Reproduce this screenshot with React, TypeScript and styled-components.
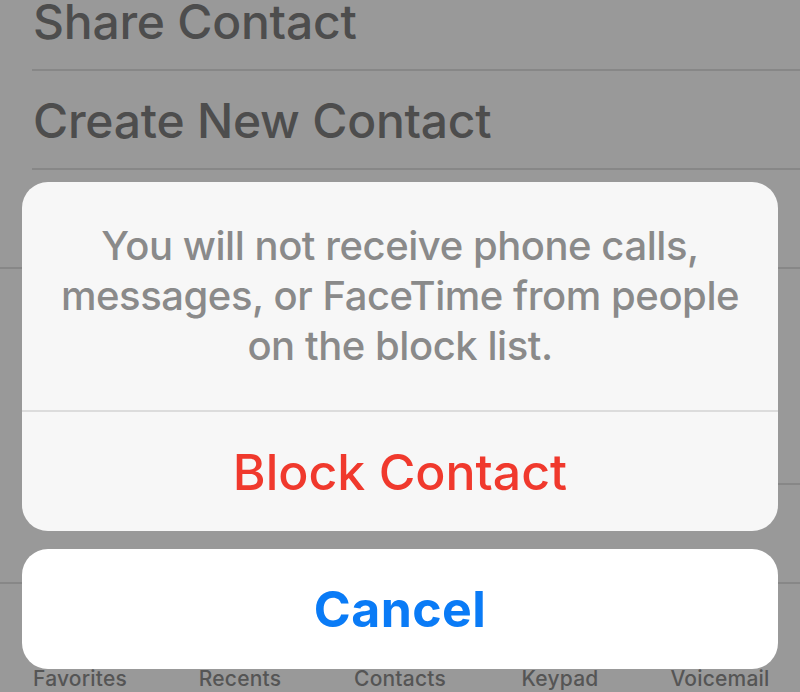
import styled, { createGlobalStyle } from "styled-components"

const GlobalStyle = createGlobalStyle`
  * { box-sizing: border-box; }
  html, body {
    margin: 0;
    padding: 0;
    background: #999999;
    font-family: Inter, "Noto Sans", "Liberation Sans", sans-serif;
  }
`

const StyledScreen = styled.main`
  position: relative;
  width: 800px;
  height: 692px;
  overflow: hidden;
  background: #999999;
  display: flex;
  flex-direction: column;
`
const StyledList = styled.ul`
  list-style: none;
  margin: -28px 0 0;
  padding: 0;
`
const StyledRow = styled.li<{ $inset?: boolean }>`
  position: relative;
  height: 99px;
  display: flex;
  align-items: center;
  padding-left: 33px;
  font-size: 48px;
  font-weight: 450;
  color: #4d4d4d;
  letter-spacing: -0.25px;

  &::after {
    content: "";
    position: absolute;
    left: ${p => (p.$inset ? "32px" : "0")};
    right: 0;
    bottom: 0;
    height: 2px;
    background: #878787;
  }
`
const StyledSectionGap = styled.li`
  height: 117px;
`
const StyledTabBar = styled.nav`
  margin-top: auto;
  height: 110px;
  border-top: 2px solid #878787;
  display: grid;
  grid-template-columns: repeat(5, 1fr);
  align-items: end;
  padding-bottom: 1px;
`
const StyledTabLabel = styled.span`
  text-align: center;
  font-size: 21px;
  font-weight: 550;
  color: #555555;
  line-height: 24px;
  letter-spacing: 0.2px;
`

// action sheet floats above the dimmed page
const StyledSheet = styled.section`
  position: absolute;
  left: 22px;
  right: 22px;
  top: 182px;
  display: flex;
  flex-direction: column;
  gap: 18px;
`
const StyledGroup = styled.div`
  background: #f7f7f7;
  border-radius: 26px;
  overflow: hidden;
`
const StyledMessage = styled.p`
  margin: 0;
  height: 230px;
  padding-top: 39px;
  border-bottom: 2px solid #dcdcdc;
  text-align: center;
  font-size: 40px;
  font-weight: 450;
  line-height: 50px;
  color: #8a8a8a;
  letter-spacing: -0.45px;
`
const StyledAction = styled.button<{ $cancel?: boolean }>`
  display: block;
  width: 100%;
  height: ${p => (p.$cancel ? "120px" : "119px")};
  border: 0;
  margin: 0;
  padding: 0;
  font-family: inherit;
  font-size: 50px;
  font-weight: ${p => (p.$cancel ? 700 : 450)};
  color: ${p => (p.$cancel ? "#0a7bf6" : "#f0392d")};
  background: ${p => (p.$cancel ? "#ffffff" : "transparent")};
  border-radius: ${p => (p.$cancel ? "26px" : "0")};
  letter-spacing: ${p => (p.$cancel ? "0.4px" : "0")};
`

const tabs = ["Favorites", "Recents", "Contacts", "Keypad", "Voicemail"]

export default function App() {
  return (
    <>
      <GlobalStyle />
      <StyledScreen>
        <StyledList>
          <StyledRow $inset>Share Contact</StyledRow>
          <StyledRow $inset>Create New Contact</StyledRow>
          <StyledRow />
          <StyledSectionGap />
          <StyledRow $inset />
        </StyledList>

        <StyledTabBar>
          {tabs.map(t => (
            <StyledTabLabel key={t}>{t}</StyledTabLabel>
          ))}
        </StyledTabBar>

        <StyledSheet>
          <StyledGroup>
            <StyledMessage>
              You will not receive phone calls,
              <br />
              messages, or FaceTime from people
              <br />
              on the block list.
            </StyledMessage>
            <StyledAction>Block Contact</StyledAction>
          </StyledGroup>
          <StyledAction $cancel>Cancel</StyledAction>
        </StyledSheet>
      </StyledScreen>
    </>
  )
}
